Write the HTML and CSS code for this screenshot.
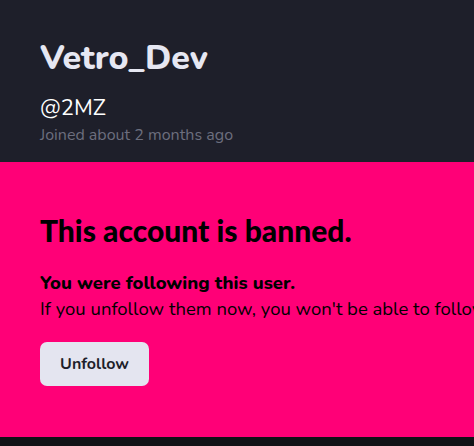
FILE: index.html
```html
<!DOCTYPE html>
<html>
  <head>
    <title>Vetro_Dev</title>
    <link rel="stylesheet" href="styles.css">
  </head>
  <body>
    <div class="profile-header">
      <h1 class="display-name">Vetro_Dev</h1>
      <div class="username">@2MZ</div>
      <div class="joined">Joined about 2 months ago</div>
    </div>

    <!-- 封禁提示 -->
    <div class="banned-box">
      <h2>This account is banned.</h2>
      <p class="banned-title">You were following this user.</p>
      <p class="banned-text">If you unfollow them now, you won't be able to follow them again.</p>
      <button class="unfollow-btn">Unfollow</button>
    </div>
    <div class="footer"></div>
  </body>
</html>
```
FILE: styles.css
```css
body {
  margin: 0;
  font-family: Nunito, "Noto Sans", sans-serif;
  background-color: #111216;
  overflow: hidden;
}
.profile-header {
  background: #1e1f2a;
  padding: 36px 40px 20px;
  height: 162px;
  box-sizing: border-box;
}
.display-name {
  margin: 0;
  color: #e6e7f2;
  font-size: 34px;
  font-weight: 800;
  line-height: 44px;
}
.username {
  margin-top: 14px;
  color: #ffffff;
  font-size: 22px;
  line-height: 28px;
}
.joined {
  margin-top: 2px;
  color: #6c6e7e;
  font-size: 16px;
  line-height: 22px;
}
.banned-box {
  background: #ff0077;
  padding: 48px 40px 51px;
  white-space: nowrap;
  overflow: hidden;
}
.banned-box h2 {
  margin: 0;
  color: #000;
  font-family: Lato, sans-serif;
  font-size: 30px;
  font-weight: 900;
  line-height: 40px;
}
.banned-title {
  margin: 20px 0 0;
  color: #000;
  font-size: 18.5px;
  font-weight: 800;
  line-height: 26px;
}
.banned-text {
  margin: 0;
  color: #000;
  font-size: 18.5px;
  line-height: 26px;
}
.unfollow-btn {
  margin-top: 20px;
  width: 109px;
  height: 44px;
  background: #e4e5f0;
  color: #1e1f2a;
  border: none;
  border-radius: 7px;
  font-family: inherit;
  font-size: 16px;
  font-weight: 700;
  cursor: pointer;
}
.footer {
  height: 9px;
}
```
